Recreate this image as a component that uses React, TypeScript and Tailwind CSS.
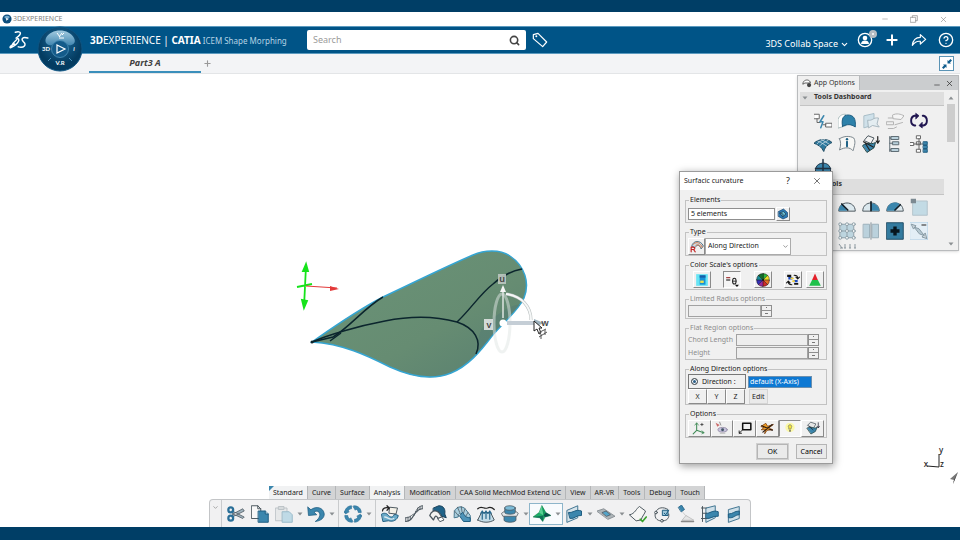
import React from 'react';
import { Minus, Plus, X, Search, CircleHelp, ChevronDown } from 'lucide-react';

const OUT = '#4b565e';
const BLUE = '#3b86ad';
const DEEP = '#1d5c80';
const PALE = '#b9d8e6';

const Icon: React.FC<{ size?: string; children: React.ReactNode }> = ({ size = 'size-[18px]', children }) => (
  <svg viewBox="0 0 24 24" className={`${size} shrink-0`} fill="none" strokeWidth={1.3} strokeLinecap="round" strokeLinejoin="round" aria-hidden="true">
    {children}
  </svg>
);

/* ---------- bottom toolbar ---------- */

const toolArt: Record<string, React.ReactNode> = {
  Cut: (
    <g>
      <path d="M7 8L23 16L21 18L8 12ZM7 16L23 8L21 5L8 12Z" fill="#9fb2bd" stroke={OUT} strokeWidth={1} />
      <circle cx="5" cy="6.500" r="3.200" stroke="#2a6f98" strokeWidth={3} />
      <circle cx="5" cy="17.500" r="3.200" stroke="#2a6f98" strokeWidth={3} />
    </g>
  ),
  Copy: (
    <g>
      <path d="M1 1H9L13 5V18H1Z" fill="#f8f8f8" stroke={OUT} />
      <path d="M9 1V5H13" stroke={OUT} />
      <path d="M10 8H19L23 12V23H10Z" fill={BLUE} stroke={DEEP} />
      <path d="M19 8V12H23" fill={PALE} stroke={DEEP} />
    </g>
  ),
  Paste: (
    <g>
      <path d="M1 4H16V21H1Z" fill="#e6e8e9" stroke="#bcc2c6" />
      <path d="M5 2H12V6H5Z" fill="#d7dbdd" stroke="#bcc2c6" />
      <path d="M10 9H19L23 13V23H10Z" fill="#bfdae6" stroke="#98b9c9" />
    </g>
  ),
  Undo: <path d="M1 3L2 14L13 13L9.500 9.500C13 6.500 18 9 17 14C16.500 17 14 20 11 22C19 21 23 17 23 12C22 3 12 1 5.500 6Z" fill={BLUE} stroke={DEEP} strokeWidth={1} />,
  Update: (
    <g fill={BLUE} stroke="#2b7199" strokeWidth={0.8}>
      <path d="M1 10C1 5 5 1 10 1V5C8 5 6 6.500 5.500 8L7 9L2 12L0 8Z" />
      <path d="M14 1C19 1 23 5 23 10H19C19 8 17.500 6 16 5.500L15 7L12 2Z" />
      <path d="M23 14C23 19 19 23 14 23V19C16 19 18 17.500 18.500 16L17 15L22 12L24 16Z" />
      <path d="M10 23C5 23 1 19 1 14H5C5 16 6.500 18 8 18.500L9 17L12 22Z" />
    </g>
  ),
  'Morph Surface': (
    <g>
      <path d="M1 12C4 10 8 11 10 14C13 17 16 17 18 12L23 14C22 20 16 23 10 21L3 22Z" fill="#6aaac8" stroke={DEEP} />
      <path d="M12 3L22 4L20 12L11 11Z" fill="#f4f1e8" stroke={OUT} />
      <path d="M2 8C2 4 6 3 10 4M8 1L11 4L8 7" stroke="#222" strokeWidth={1.600} />
      <path d="M5 16C9 16 12 21 17 18" stroke="#dceaf1" strokeWidth={1.800} />
    </g>
  ),
  'Curvature Comb': (
    <g stroke={OUT} strokeWidth={1.200}>
      <path d="M1 22C13 22 10 6 23 5" strokeWidth={1.600} />
      <path d="M1 17C8 17 8 13 12 12M12 14C15 8 16 2 23 1" />
      <path d="M1 17V22M4 16V21M7 15V19M14 9L16 9M17 4V8M20 2V6M23 1V5" />
    </g>
  ),
  'Reflect Lines': (
    <g>
      <path d="M6 4L13 1C20 1 22 6 21 12L23 17L17 15C15 10 12 8 6 8Z" fill="#1f6288" stroke="#173f58" />
      <path d="M1 14C3 8 8 6 13 10L17 16L12 18C10 13 8 14 6 20Z" fill="#f3f3f1" stroke={OUT} strokeWidth={1.600} />
      <path d="M12 18L17 16L20 20L15 22Z" fill="#fff" stroke={OUT} />
    </g>
  ),
  Highlight: (
    <g>
      <path d="M2 8C5 1 13 1 17 6L23 14V21L16 19L11 12C9 10 7 12 7 16L2 17Z" fill="#a9cede" stroke="#42738c" />
      <path d="M13 10C15 13 16 17 23 17V22L14 22L9 15Z" fill="#4d93b8" stroke={DEEP} />
      <path d="M2 8L7 14M6 3L9 10M11 2L12 9M16 5L14 11M20 10L17 15" stroke={OUT} strokeWidth={1} />
    </g>
  ),
  'Distance Analysis': (
    <g>
      <path d="M1 20L6 10H18L23 20C16 24 8 24 1 20Z" fill="#c3dce8" stroke={OUT} />
      <path d="M1 5C6 0 9 6 14 4C18 2 20 3 23 6" stroke="#222" strokeWidth={1.600} />
      <path d="M7 19V8M12 18V8M17 19V8M5 11L7 8L9 11M10 11L12 8L14 11M15 11L17 8L19 11" stroke="#27678c" strokeWidth={1.600} />
    </g>
  ),
  'Section Analysis': (
    <g stroke={OUT} strokeWidth={1}>
      <path d="M4 14V20C4 24 20 24 20 20V14Z" fill={BLUE} />
      <path d="M1 11L5 8H19L23 11L21 15H3Z" fill="#e4e7e9" />
      <path d="M5 4V10C5 13 19 13 19 10V4Z" fill={BLUE} />
      <ellipse cx="12" cy="4" rx="7" ry="3" fill="#7dbbd7" />
    </g>
  ),
  'Surfacic Curvature': (
    <g strokeWidth={0.6}>
      <path d="M12 1L17 10L24 14L16 16L13 22L9 17L0 16L8 10Z" fill="#1dae68" stroke="#0b6b3b" />
      <path d="M12 1L14 14L8 10Z" fill="#58cf93" />
      <path d="M12 1L17 10L14 14Z" fill="#169a5d" />
      <path d="M17 10L24 14L16 16L14 14Z" fill="#0b4f4a" />
      <path d="M0 16L14 14L13 22L9 17Z" fill="#0f7358" />
    </g>
  ),
  'Cutting Planes': (
    <g>
      <path d="M3 7L17 1V17L3 23Z" fill="#d5e3ea" stroke="#3f7390" />
      <path d="M5 10C11 11 14 5 22 8V14C15 13 13 19 7 18Z" fill={BLUE} stroke={DEEP} />
    </g>
  ),
  Plane: (
    <g>
      <path d="M0 8L9 5L24 15L15 19Z" fill="#aeb5b9" stroke="#777f84" strokeWidth={1} />
      <path d="M7 10L12 8L18 13L13 15Z" fill="#54a3c7" stroke={OUT} strokeWidth={1} />
    </g>
  ),
  'Check Surface': (
    <g>
      <path d="M1 13C8 12 10 4 14 2L22 8C21 12 18 14 16 20L10 21Z" fill="#f6f6f5" stroke={OUT} />
      <path d="M15 19L18 22L23 16" stroke="#38a22b" strokeWidth={2.200} />
    </g>
  ),
  'Check Contour': (
    <g>
      <path d="M4 9C6 3 14 2 20 6M3 11C1 19 8 22 13 21C19 21 22 17 21 12" stroke={OUT} />
      <path d="M13 7H20V14H13Z" fill="#9cc6da" stroke={DEEP} />
      <circle cx="4" cy="10" r="1.800" fill="#fff" stroke={OUT} />
      <circle cx="12" cy="21" r="1.800" fill="#fff" stroke={OUT} />
      <path d="M15 11L17 13L21 7" stroke={DEEP} />
    </g>
  ),
  Lighting: (
    <g>
      <path d="M2 3L6 0L10 6L6 9Z" fill={BLUE} stroke={DEEP} strokeWidth={1} />
      <path d="M8 10L14 17" stroke="#ccc" />
      <path d="M7 20L12 14L22 20Z" fill="#e5e5e5" stroke="#b5b5b5" strokeWidth={1} />
      <path d="M6 22H22" stroke="#888" strokeWidth={2} />
    </g>
  ),
  'Local Section': (
    <g>
      <path d="M7 4L19 1V17L7 23Z" fill="#cfe0e9" stroke="#3f7390" />
      <path d="M7 11C12 12 15 6 23 9V15C16 14 13 19 7 18Z" fill={BLUE} stroke={DEEP} />
      <path d="M2 2V22M0 4H7M2 11H7M0 18H7" stroke={OUT} />
    </g>
  ),
  'Half Section': (
    <g>
      <path d="M5 6L19 2V18L5 23Z" fill="#cfe0e9" stroke="#3f7390" />
      <path d="M5 12C11 12 12 8 19 8V13C13 13 12 18 5 17Z" fill={BLUE} stroke={DEEP} />
    </g>
  ),
};

const toolGroups: { name: string; menu?: boolean }[][] = [
  [{ name: 'Cut' }, { name: 'Copy' }, { name: 'Paste', menu: true }, { name: 'Undo', menu: true }],
  [{ name: 'Update', menu: true }],
  [
    { name: 'Morph Surface' },
    { name: 'Curvature Comb' },
    { name: 'Reflect Lines' },
    { name: 'Highlight' },
    { name: 'Distance Analysis' },
    { name: 'Section Analysis', menu: true },
    { name: 'Surfacic Curvature', menu: true },
    { name: 'Cutting Planes', menu: true },
    { name: 'Plane', menu: true },
    { name: 'Check Surface' },
    { name: 'Check Contour' },
    { name: 'Lighting' },
    { name: 'Local Section' },
    { name: 'Half Section' },
  ],
];

const tabs = ['Standard', 'Curve', 'Surface', 'Analysis', 'Modification', 'CAA Solid MechMod Extend UC', 'View', 'AR-VR', 'Tools', 'Debug', 'Touch'];

const Caret = () => (
  <svg viewBox="0 0 6 4" className="h-1 w-1.5" aria-hidden="true">
    <path d="M0.500 0.500H5.500L3 3.500Z" fill="#8b8f92" />
  </svg>
);

const ActionBar = () => (
  <div className="relative mx-auto w-fit">
    <div className="flex pl-[60px]" role="tablist">
      {tabs.map(tab => (
        <button
          key={tab}
          role="tab"
          aria-selected={tab === 'Analysis'}
          className={`relative h-[13px] border-r border-[#b4b6b8] px-1 text-[7px] leading-3 whitespace-nowrap text-[#222] ${
            tab === 'Analysis' || tab === 'Standard' ? 'bg-[#f1f2f3]' : 'bg-[#d3d4d5]'
          }`}
        >
          {tab === 'Standard' && (
            <svg viewBox="0 0 5 5" className="absolute top-0 left-0 size-[5px]" aria-hidden="true">
              <path d="M0 0H5L0 5Z" fill={BLUE} />
            </svg>
          )}
          {tab}
        </button>
      ))}
    </div>
    <div className="flex h-7 items-stretch rounded-t border border-b-0 border-[#c3c5c7] bg-[#f1f1f2] pr-0.5">
      <button aria-label="Collapse action bar" className="flex w-3 justify-center border-r border-[#c9cbcd] pt-1 text-[#777]">
        <ChevronDown size={7} />
      </button>
      {toolGroups.map((group, i) => (
        <div key={i} className="flex items-center border-l border-[#c9cbcd] px-0.5 first-of-type:border-l-0">
          {group.map(tool => {
            const active = tool.name === 'Surfacic Curvature';
            return (
              <div key={tool.name} className={`flex h-[20px] items-center ${active ? 'bg-[#f8fbfd] outline outline-[#8db5ca]' : ''}`}>
                <button aria-label={tool.name} className="flex w-6 justify-center">
                  <Icon>{toolArt[tool.name]}</Icon>
                </button>
                {tool.menu && (
                  <button aria-label={`${tool.name} menu`} className="flex w-2 justify-center">
                    <Caret />
                  </button>
                )}
              </div>
            );
          })}
        </div>
      ))}
    </div>
  </div>
);

/* ---------- app options panel ---------- */

const gauge = (needle: string, side: string) => (
  <g>
    <path d="M1 17C1 3 23 3 23 17Z" fill="#dbe8ee" stroke={OUT} />
    <path d={side} fill={BLUE} />
    <path d={needle} stroke="#111d26" strokeWidth={2.200} />
  </g>
);

const dashboard: [string, React.ReactNode][] = [
  ['Connect', <g><path d="M0 3H7V9H0ZM16 15H24V20H16Z" fill="#fff" stroke="#666" /><path d="M4 9V14H8M12 17H16" stroke="#666" /><path d="M13 5L8 13H12L9 21" stroke={BLUE} strokeWidth={2} /></g>],
  ['Surface Patch', <g><path d="M0 21V10C2 4 6 3 10 3V18Z" fill="#fff" stroke="#abb" /><path d="M6 19C4 8 8 4 13 4C21 4 24 9 23 20C17 16 13 16 6 19Z" fill="#2d81aa" stroke={DEEP} /></g>],
  ['Fill', <g><path d="M3 5L16 2V17L3 21Z" fill="#cfe1ea" stroke="#a7bcc6" /><path d="M8 11C15 12 14 7 22 8L20 16L23 20L14 18L9 21Z" fill="#e4edf1" stroke="#a8b7bf" /></g>],
  ['Offset', <g stroke="#b2b2b2"><path d="M9 4C14 1 20 3 24 5L20 10L10 9Z" fill="#f5f5f5" /><path d="M3 8H9M1 13H10V17H1ZM12 17L22 14M3 22H10L14 20" /></g>],
  ['Swap', <g stroke="#201650" strokeWidth={2.600}><path d="M9 5H6C0 7 0 16 6 18H7M15 18H18C24 16 24 7 18 5H17" /><path d="M8 2L12 5L8 9ZM16 21L12 18L16 14Z" fill="#201650" strokeWidth={1} /></g>],
  ['Mesh', <g><path d="M0 11C5 5 18 4 24 10C19 13 15 15 13 22C10 16 6 13 0 11Z" fill="#2d789d" stroke="#214c63" /><path d="M5 8C10 10 14 13 17 15M10 6L20 12M19 7C14 10 9 12 7 15M14 6C9 8 6 9 4 12" stroke="#c9dce5" strokeWidth={1} /></g>],
  ['Information', <g><path d="M2 5C8 1 16 1 21 4C24 9 22 14 20 21C16 16 9 16 2 20C4 14 4 9 2 5Z" fill="#f7f7f5" stroke="#78848b" /><path d="M12 9V15" stroke="#1c6085" strokeWidth={2.600} /><circle cx="12" cy="5.500" r="1.600" fill="#1c6085" /></g>],
  ['Import', <g><path d="M3 7L8 1L16 4L12 11Z" fill="#f3f3f3" stroke={OUT} /><path d="M1 14C8 8 10 14 18 10L16 17L7 23Z" fill={BLUE} stroke="#244" /><path d="M2 9L15 16M5 12L10 20M21 2V10M19 8L21 11L23 8" stroke="#222" strokeWidth={1.600} /></g>],
  ['Structure', <g><path d="M7 2H17V6H7ZM9 9H17V13H9ZM7 18H17V22H7Z" fill="#b9d0db" stroke="#5d6a72" /><path d="M5 2V22M5 11H9M5 4H7M5 20H7" stroke="#5d6a72" /></g>],
  ['Tree', <g stroke="#666"><path d="M9 1H14V5H9ZM0 10H5V14H0ZM9 9H14V13H9ZM9 19H14V23H9Z" fill="#fff" /><path d="M12 5V19M5 12H18" /><path d="M18 9H23V13H18ZM18 14H23V18H18ZM18 19H23V23H18Z" fill={BLUE} stroke={DEEP} /></g>],
  ['Compare', <g><path d="M2 18C0 3 24 3 22 18L18 22H6Z" fill={BLUE} stroke="#234" /><path d="M12 2V22M2 14H22" stroke="#234" strokeWidth={2} /></g>],
];

const tools: [string, React.ReactNode][] = [
  ['Free', <path d="M2 2H22V22H2Z" fill="#cde4f3" stroke="#7db2d6" />],
  ['Low', gauge('M13 16L5 8', 'M12 17H1C1 13 3 10 6 8Z')],
  ['Middle', gauge('M12 17V5', 'M12 7C18 7 23 11 23 17H12Z')],
  ['High', gauge('M12 16L19 9', 'M1 17C1 8 11 3 18 8L12 17Z')],
  ['Corner', <g><path d="M4 4H23V23H4Z" fill="#c3dbe5" stroke="#b4c4cc" /><path d="M1 1H8V7H1Z" fill="#7c8a92" /></g>],
  ['Anchor', <path d="M2 2H22V22H2Z" fill="#e3edf2" stroke="#8da1ac" />],
  ['Grid', <g><path d="M3 3H21V21H3Z" fill="#bdd5df" stroke="#90a1aa" /><path d="M12 3V21M3 12H21" stroke="#90a1aa" /><g fill="#f3f6f7" stroke="#90a1aa"><circle cx="3" cy="3" r="2" /><circle cx="12" cy="3" r="2" /><circle cx="21" cy="3" r="2" /><circle cx="3" cy="12" r="2" /><circle cx="12" cy="12" r="2" /><circle cx="21" cy="12" r="2" /><circle cx="3" cy="21" r="2" /><circle cx="12" cy="21" r="2" /><circle cx="21" cy="21" r="2" /></g></g>],
  ['Mirror', <g><path d="M2 3H10V21H2ZM14 3H22V21H14Z" fill="#bad1dc" stroke="#9bb0ba" /><path d="M12 1V23" stroke="#7e8d95" /></g>],
  ['Add', <g><path d="M1 1H23V23H1Z" fill="#347b9f" stroke="#214d66" /><path d="M12 6V18M6 12H18" stroke="#07151e" strokeWidth={4.500} strokeLinecap="butt" /></g>],
  ['Stretch', <g><path d="M0 0H24V24H0Z" fill="#e3eef6" stroke="#a9cbe2" /><path d="M2 3L8 5L5 9ZM22 22L16 20L20 15Z" fill="#cbd5da" stroke="#8799a3" /><path d="M6 7L12 9L19 18L13 16Z" fill="#b5c8d2" stroke="#8799a3" /><path d="M16 4H21" stroke="#666" strokeWidth={2} /></g>],
];

const Section: React.FC<{ title: string; hidden?: boolean }> = ({ title, hidden }) => (
  <h3 className={`flex items-start gap-1.5 border-b border-[#c4c4c4] bg-[#dedede] text-[7px] leading-[10px] font-bold text-[#333] ${hidden ? 'h-4 pl-6' : 'h-[14px] pl-0.5'}`}>
    {!hidden && <span className="pt-1"><Caret /></span>}
    {title}
  </h3>
);

const AppOptions = () => (
  <aside className="absolute top-px right-px w-[162px] border border-[#b9bbbd] bg-[#f0f0f0] shadow">
    <header className="flex h-[14px] items-center bg-[#cbcdcf] text-[#333]">
      <h2 className="flex h-full items-center gap-0.5 border-r border-[#b9bbbd] bg-[#f0f0f0] px-1 text-[7px] leading-3 whitespace-nowrap">
        <Icon size="size-2.5">
          <path d="M2 14C2 2 20 2 20 12H8Z" fill="#fff" stroke="#444" strokeWidth={2} />
          <circle cx="17" cy="17" r="5" fill="#444" />
        </Icon>
        App Options
      </h2>
      <button aria-label="Minimize panel" className="ml-auto pt-1"><Minus size={8} /></button>
      <button aria-label="Close panel" className="px-1"><X size={9} /></button>
    </header>
    <div className="flex h-[160px] overflow-hidden pt-0.5 pl-0.5">
      <div className="min-w-0 flex-1">
        <Section title="Tools Dashboard" />
        <div className="grid h-[73px] auto-rows-[23px] grid-cols-[repeat(5,24px)] place-items-center overflow-hidden pt-[3px] pl-[11px]">
          {dashboard.map(([name, art]) => (
            <button key={name} aria-label={name}><Icon>{art}</Icon></button>
          ))}
        </div>
        <Section title="Tools" hidden />
        <div className="grid auto-rows-[24px] grid-cols-[repeat(5,24px)] place-items-center pl-[11px]">
          {tools.map(([name, art]) => (
            <button key={name} aria-label={name}><Icon>{art}</Icon></button>
          ))}
        </div>
        <svg viewBox="0 0 24 6" className="ml-9 h-1.5 w-6" stroke="#8b979e" aria-hidden="true">
          <path d="M3 1L6 5M9 1V5M14 1V5M19 1V5M4 5H7M8 5H10M13 5H15M18 5H20" fill="none" />
        </svg>
      </div>
      <div className="flex w-[14px] flex-col items-center justify-between py-1">
        <div className="flex flex-col items-center gap-1">
          <div className="rotate-180"><Caret /></div>
          <div className="h-[38px] w-2 bg-[#cdcdcd]" />
        </div>
        <Caret />
      </div>
    </div>
  </aside>
);

/* ---------- surfacic curvature dialog ---------- */

const Group: React.FC<{ title: string; disabled?: boolean; children: React.ReactNode }> = ({ title, disabled, children }) => (
  <fieldset disabled={disabled} className={`min-w-0 border border-[#c2c2c2] px-0.5 ${disabled ? 'text-[#8c8c8c]' : 'text-[#1a1a1a]'}`}>
    <legend className="ml-px h-2.5 px-px leading-[10px]">{title}</legend>
    {children}
  </fieldset>
);

const raised = 'flex items-center justify-center border border-t-white border-l-white border-r-[#8a8a8a] border-b-[#8a8a8a] bg-[#f0f0f0]';
const sunken = 'flex items-center justify-center border border-t-[#8a8a8a] border-l-[#8a8a8a] border-r-white border-b-white bg-[#f5f5f5]';

const Spinner: React.FC<{ name: string; label?: string; width: string }> = ({ name, label, width }) => (
  <div className="flex h-[13px] items-center pr-[5px]">
    {label && <label htmlFor={name} className="w-12 shrink-0 whitespace-nowrap">{label}</label>}
    <input id={name} aria-label={name} className={`h-3 min-w-0 border border-[#a2a2a2] bg-[#eee] ${width}`} />
    <div className="flex h-3 w-[11px] flex-col border border-[#8f8f8f]">
      <button aria-label={`${name} up`} className="flex h-[5px] items-center justify-center border-b border-[#8f8f8f]"><span className="size-px bg-[#777]" /></button>
      <button aria-label={`${name} down`} className="flex h-[5px] items-center justify-center"><span className="h-px w-[3px] bg-[#777]" /></button>
    </div>
  </div>
);

const colorArt: [string, string, React.ReactNode][] = [
  ['Color scale', raised, <g><path d="M2 2H22V22H2Z" fill="#66e4f3" /><path d="M8 4H18V20H8Z" fill="#1592d7" /><path d="M8 4H18V8H8Z" fill="#1760a8" /><path d="M9 13H15V17H9Z" fill="#f0e34c" /></g>],
  ['Sharp', sunken, <g><path d="M2 7H9V9H2Z" fill="#a03030" /><path d="M2 11H9V13H2Z" fill="#222" /><ellipse cx="16" cy="14" rx="3" ry="5" stroke="#222" strokeWidth={1.800} /><path d="M13 14H19" stroke="#222" strokeWidth={1.500} /><path d="M17 20H24L20.500 24Z" fill="#111" /></g>],
  ['Color wheel', raised, <g stroke="#111" strokeWidth={0.8}><path d="M12 12V1A11 11 0 0 1 20 4Z" fill="#2dbb3f" /><path d="M12 12L20 4A11 11 0 0 1 23 12Z" fill="#f0df29" /><path d="M12 12H23A11 11 0 0 1 20 20Z" fill="#e56f25" /><path d="M12 12L20 20A11 11 0 0 1 12 23Z" fill="#d02a2a" /><path d="M12 12V23A11 11 0 0 1 4 20Z" fill="#9a2c9b" /><path d="M12 12L4 20A11 11 0 0 1 1 12Z" fill="#3530b8" /><path d="M12 12H1A11 11 0 0 1 4 4Z" fill="#188b97" /><path d="M12 12L4 4A11 11 0 0 1 12 1Z" fill="#156f2c" /></g>],
  ['Swap colors', raised, <g><path d="M2 3H9V7H2ZM14 17H21V20H14Z" fill="#111" /><path d="M4 7H11V11H4ZM13 12H20V16H13Z" fill="#1a49c4" /><path d="M9 9H12M12 14H14" stroke="#f4d43d" strokeWidth={3} /><path d="M14 4C19 4 20 6 20 9M17 7L20 10L23 7M10 20C5 20 4 18 4 15M1 17L4 14L7 17" stroke="#111" strokeWidth={1.800} /></g>],
  ['Range', raised, <g><path d="M12 1L17 12H7Z" fill="#e3202a" /><path d="M7 12H17L22 22H2Z" fill="#1fc14b" /></g>],
];

const optionArt: [string, string, React.ReactNode][] = [
  ['3D axis', raised, <g><path d="M8 16V4M8 16L20 20M8 16L2 22" stroke="#3f8b56" strokeWidth={1.800} /><path d="M5 7L8 3L11 7M17 17L21 20L17 22" stroke="#3f8b56" /><path d="M17 4V8M15 6H19" stroke="#333" /></g>],
  ['On the fly', raised, <g><path d="M1 3L8 7L4 10Z" fill="#cc6a6a" /><path d="M8 2L10 7" stroke="#777" /><ellipse cx="13" cy="15" rx="8" ry="4" fill="#c6c2dc" stroke="#8d86a0" /><circle cx="13" cy="15" r="2.500" fill="#456" /><path d="M9 21H17" stroke="#aaa" /></g>],
  ['Min max box', raised, <g><path d="M8 4H22V15H8Z" stroke="#111" strokeWidth={2.600} /><path d="M8 15L2 21M2 17V21H6" stroke="#111" strokeWidth={1.500} /></g>],
  ['No highlight', raised, <g><path d="M2 9L10 4L13 9L23 6L15 12L22 15L12 16L8 22L9 15H2L6 12Z" fill="#ef9e24" stroke="#7a3a0c" /><path d="M3 8L21 16M5 19L21 6" stroke="#2a1a12" strokeWidth={2} /></g>],
  ['Light source', sunken, <g><circle cx="12" cy="11" r="8" fill="#fbf9a8" /><path d="M9.500 11A3 3 0 1 1 14.500 11L13.500 14H10.500Z" fill="#f3e53a" stroke="#666" strokeWidth={1} /><path d="M11.500 17H12.500" stroke="#333" strokeWidth={2} /></g>],
  ['Gallery', raised, <g><path d="M3 7L8 2L17 5L13 12Z" fill="#e6e6e6" stroke={OUT} /><path d="M2 12C9 8 12 14 19 11L16 18L9 22Z" fill={BLUE} stroke="#244" /><path d="M5 9L12 15M21 3V11M19 9L21 12L23 9" stroke="#223" /></g>],
];

const push = 'h-[15px] border border-[#b5b5b5] bg-[#eaeaea]';

const CurvatureDialog = () => (
  <section
    role="dialog"
    aria-labelledby="dialog-title"
    className="absolute top-[97px] right-[127px] flex w-[154px] flex-col border border-[#9b9b9b] bg-[#f0f0f0] text-[7px] leading-[10px] shadow-[1px_2px_8px_rgba(0,0,0,0.4)]"
  >
    <header className="flex h-[18px] items-center bg-white pr-2.5 pl-1 text-[#222]">
      <h2 id="dialog-title" className="flex-1">Surfacic curvature</h2>
      <button aria-label="Help" className="mr-[22px] text-[9px]">?</button>
      <button aria-label="Close dialog"><X size={10} strokeWidth={1.500} /></button>
    </header>
    <form className="flex flex-col gap-1 px-[5px] pt-[5px] pb-1" onSubmit={e => e.preventDefault()}>
      <Group title="Elements">
        <div className="flex h-[17px] items-center gap-px">
          <input aria-label="Elements" defaultValue="5 elements" className="h-3 w-[87px] border border-[#8f8f8f] bg-white px-0.5 text-[#222]" />
          <button aria-label="Element list" className={`size-[14px] ${raised}`}>
            <Icon size="size-3"><path d="M3 7L13 2L21 9V18L12 22L3 17Z" fill="#2a7ab4" stroke="#123c66" /><path d="M6 10L13 7L18 12L12 17Z" fill="#68bfd2" stroke="#234" /><path d="M12 17V12L6 10" stroke="#234" /></Icon>
          </button>
        </div>
      </Group>
      <Group title="Type">
        <div className="flex h-[18px] items-center">
          <button aria-label="Curvature type" className={`h-[17px] w-[17px] ${raised}`}>
            <Icon size="size-[14px]"><path d="M3 12C5 2 18 1 23 12L19 17C17 10 12 9 9 14Z" fill="#c7dde8" stroke="#356" /><path d="M6 9C12 3 18 7 21 14M10 11C14 8 16 10 18 14" stroke="#e0703a" strokeWidth={1.500} /><path d="M2 22V14H6C9 14 9 18 6 18H2M6 18L9 22" stroke="#c22626" strokeWidth={2} /></Icon>
          </button>
          <div className="relative w-[86px]">
            <select aria-label="Type" className="h-[17px] w-full appearance-none border border-[#ababab] bg-white pl-0.5 text-[#222]">
              <option>Along Direction</option>
            </select>
            <ChevronDown size={7} className="pointer-events-none absolute top-[5px] right-0.5 text-[#555]" />
          </div>
        </div>
      </Group>
      <Group title="Color Scale's options">
        <div className="flex h-[19px] items-center justify-between pl-[5px]">
          {colorArt.map(([name, look, art], i) => (
            <button key={name} type="button" aria-label={name} className={`h-[17px] w-[18px] ${look} ${i < 3 ? 'mr-2' : ''}`}>
              <Icon size="size-[14px]">{art}</Icon>
            </button>
          ))}
        </div>
      </Group>
      <Group title="Limited Radius options" disabled>
        <div className="h-[14px]"><Spinner name="Limited radius" width="w-[73px]" /></div>
      </Group>
      <Group title="Flat Region options" disabled>
        <div className="h-[26px]">
          <Spinner name="Chord Length" label="Chord Length" width="flex-1" />
          <Spinner name="Height" label="Height" width="flex-1" />
        </div>
      </Group>
      <Group title="Along Direction options">
        <div className="flex h-[15px] items-center gap-0.5">
          <label className="flex h-[15px] w-[58px] items-center gap-1 border border-[#777] pl-0.5">
            <input type="radio" defaultChecked className="size-[7px] appearance-none rounded-full border border-[#555] bg-[#2d5f87] ring-1 ring-white ring-inset" />
            Direction :
          </label>
          <input aria-label="Direction element" defaultValue="default (X-Axis)" className="h-3 w-16 border border-[#6b8fae] bg-[#0d78d3] px-px text-white" />
        </div>
        <div className="flex h-[15px]">
          {['X', 'Y', 'Z'].map(axis => (
            <button key={axis} type="button" className={`w-[19px] ${raised}`}>{axis}</button>
          ))}
          <button type="button" className="ml-1 border border-[#d4d4d4] bg-[#eaeaea] px-0.5">Edit</button>
        </div>
      </Group>
      <Group title="Options">
        <div className="flex h-[18px] items-center">
          {optionArt.map(([name, look, art]) => (
            <button key={name} type="button" aria-label={name} className={`h-[17px] flex-1 ${look}`}>
              <Icon size="size-[14px]">{art}</Icon>
            </button>
          ))}
        </div>
      </Group>
      <div className="mt-0.5 flex justify-end gap-2">
        <button className={`w-[31px] outline outline-[#d0d0d0] ${push}`}>OK</button>
        <button type="button" className={`w-[31px] ${push}`}>Cancel</button>
      </div>
    </form>
  </section>
);

/* ---------- 3D view ---------- */

const Viewport = () => (
  <svg viewBox="0 74 960 453" className="absolute inset-0 size-full" role="img" aria-label="3D view">
    <defs>
      <linearGradient id="skin" x1="0" y1="0" x2="1" y2="1">
        <stop offset="0" stopColor="#6b9478" />
        <stop offset="0.600" stopColor="#668c72" />
        <stop offset="1" stopColor="#587f70" />
      </linearGradient>
    </defs>
    <path
      d="M312 342C335 326 356 311 383 297C415 282 445 267 473 255C484 250 500 249 510 256C525 266 530 283 524 298C518 311 503 323 492 336C480 352 468 366 451 373C432 381 412 377 390 367C366 355 343 344 312 342Z"
      fill="url(#skin)"
      stroke="#35a5d2"
      strokeWidth={1.500}
    />
    <path d="M477 353C487 342 494 333 503 323L520 305C514 303 499 313 488 322C476 332 480 340 477 353Z" fill="#547c74" opacity={0.5} />
    <g fill="none" stroke="#0b252d" strokeWidth={1.500}>
      <path d="M312 342C328 335 358 326 385 321C410 316 435 316 457 322C475 328 482 341 476 354" />
      <path d="M312 342L333 337C350 327 364 308 383 297" />
      <path d="M330 341L341 333M457 322C470 310 480 294 493 284C502 276 510 271 522 269" />
    </g>
    <circle cx="312" cy="342" r="1.500" fill="#0b252d" />

    <g stroke="#16e31b" strokeWidth={1.800} fill="#16e31b">
      <path d="M306 266L304 307M297 287L312 284" fill="none" />
      <path d="M306 264L303 271H308ZM304 308L302 300L307 301Z" />
    </g>
    <path d="M306 286L337 288" stroke="#e33a3a" strokeWidth={1} />
    <path d="M339 289L330 286V291Z" fill="#e33a3a" />

    {/* robot manipulator */}
    <ellipse cx="502" cy="323" rx="8" ry="29" fill="none" stroke="#dfe5e3" strokeWidth={3} opacity={0.5} />
    <path d="M506 294C522 296 531 307 531 320" fill="none" stroke="#b9bfbf" strokeWidth={3} />
    <path d="M506 294C522 296 531 307 531 320" fill="none" stroke="#f5f7f7" strokeWidth={2} />
    <path d="M503 318V287" stroke="#dfe4e2" strokeWidth={1.500} />
    <path d="M503 285L500 292H506Z" fill="#f5f5f5" />
    <path d="M507 323H535" stroke="#c5ced6" strokeWidth={4} />
    <path d="M534 319L544 323L534 327Z" fill="#9eb3bf" />
    <circle cx="503" cy="323" r="3.500" fill="#fff" />
    <rect x="498" y="274" width="8" height="10" fill="#bdc7c1" opacity={0.9} />
    <rect x="484" y="319" width="9" height="11" fill="#dfe3e2" opacity={0.9} />
    <g fontFamily="Noto Sans, sans-serif" fontWeight={600} fontSize={9} textAnchor="middle" fill="#444">
      <text x="502" y="282">u</text>
      <text x="489" y="328">v</text>
      <text x="545" y="326">w</text>
    </g>
    <path d="M534 321V331L537 329L539 334L541 333L539 328H542Z" fill="#fff" stroke="#222" strokeWidth={1} />
    <path d="M538 333L546 329M539 337L547 332M541 339V334M545 335V330" stroke="#555" strokeWidth={1} />

    {/* absolute axis */}
    <path d="M927 466L939 467V454" fill="none" stroke="#222" strokeWidth={1} />
    <g fontFamily="Noto Sans, sans-serif" fontWeight={500} fontSize={8} textAnchor="middle" fill="#222">
      <text x="941" y="453">y</text>
      <text x="926" y="467">x</text>
      <text x="942" y="467">z</text>
    </g>
    <path d="M958 472L950 479L954 480L953 484Z" fill="#777" />
    <path d="M958 472L954 480L953 484Z" fill="#333" />
  </svg>
);

/* ---------- top bars ---------- */

const Compass = () => (
  <button aria-label="Compass" className="absolute -top-px left-[37px] z-10 size-[46px]">
    <svg viewBox="0 0 46 46" className="size-full">
      <defs>
        <radialGradient id="ball" cx="0.500" cy="0.350">
          <stop offset="0" stopColor="#1d6c9d" />
          <stop offset="1" stopColor="#043c61" />
        </radialGradient>
        <linearGradient id="cap" x1="0" y1="0" x2="0" y2="1">
          <stop offset="0" stopColor="#a3cbe0" />
          <stop offset="1" stopColor="#4287b1" />
        </linearGradient>
      </defs>
      <circle cx="23" cy="23" r="22" fill="url(#ball)" stroke="#0d5584" />
      <path d="M9 12C14 2 32 2 37 12C40 18 34 20 31 19C28 14 18 14 15 19C11 20 7 17 9 12Z" fill="url(#cap)" />
      <circle cx="23" cy="23" r="8.500" fill="#145b8a" stroke="#4c90b9" strokeWidth={0.800} />
      <path d="M20 19L28 23L20 27Z" fill="none" stroke="#fff" strokeWidth={1.200} />
      <path d="M14 32L11 35M32 32L35 35" stroke="#4990b8" />
      <g fill="#fff" fontFamily="Lato, sans-serif" fontWeight={700} fontSize={6} textAnchor="middle">
        <text x="9" y="25">3D</text>
        <text x="23" y="39">V.R</text>
        <text x="37" y="25" fontStyle="italic">i</text>
      </g>
      <path d="M20 7L23 11V13M25 7L22 11M25 9L27 7M24 12L27 12" stroke="#fff" fill="none" />
    </svg>
  </button>
);

const App = () => (
  <div className="flex min-h-screen flex-col overflow-hidden bg-white font-['Noto_Sans','Open_Sans',sans-serif]">
    <div className="h-3 bg-[#003e66]" />
    <div className="flex h-[14px] items-center px-0.5 text-[7px] leading-3 text-[#7f7f7f]">
      <Icon size="size-2.5">
        <circle cx="12" cy="12" r="11" fill="#0c4d7c" />
        <path d="M5 7C9 3 15 3 19 7L16 11H8Z" fill="#74aacd" />
        <path d="M10 9L16 12L10 16Z" fill="#fff" />
      </Icon>
      <span className="ml-px">3DEXPERIENCE</span>
      <div className="ml-auto flex items-center gap-[21px] pr-2.5">
        <button aria-label="Minimize"><Minus size={8} strokeWidth={1.500} /></button>
        <button aria-label="Restore">
          <Icon size="size-2"><path d="M2 7H17V22H2ZM7 7V2H22V17H17" stroke="#888" strokeWidth={2} /></Icon>
        </button>
        <button aria-label="Close"><X size={9} strokeWidth={1.500} /></button>
      </div>
    </div>

    <header className="relative flex h-7 items-center border-y border-[#5b9abf] bg-[#005487] text-white">
      <svg viewBox="0 0 30 28" className="ml-2 w-[22px]" fill="none" stroke="#fff" strokeWidth={2} strokeLinecap="round" strokeLinejoin="round" aria-hidden="true">
        <path d="M10 3C18 1 20 5 11 11C18 11 15 19 4 24C6 19 8 16 12 13M4 24C1 25 4 20 9 19" />
        <path d="M27 11C20 9 17 12 21 16C26 20 22 25 14 23" />
      </svg>
      <Compass />
      <h1 className="ml-[60px] flex w-[217px] shrink-0 items-baseline gap-0.5 text-[10px] whitespace-nowrap">
        <span><b>3D</b>EXPERIENCE | <b>CATIA</b></span>
        <span className="text-[8px] text-[#b5d3e4]">ICEM Shape Morphing</span>
      </h1>
      <div className="flex h-5 w-[219px] items-center rounded-xs bg-white px-1.5">
        <input aria-label="Search" placeholder="Search" className="min-w-0 flex-1 text-[9px] outline-none placeholder:text-[#9a9a9a]" />
        <button aria-label="Run search" className="text-[#444]"><Search size={11} strokeWidth={3.500} /></button>
      </div>
      <button aria-label="Tags" className="ml-1.5">
        <Icon size="size-4">
          <path d="M2 4L9 2L22 15L16 22L2 10Z" stroke="#fff" strokeWidth={1.800} />
          <circle cx="6.500" cy="6.500" r="1.500" fill="#fff" />
        </Icon>
      </button>
      <div className="ml-auto flex items-center pr-1.5">
        <button className="mr-2 flex items-center gap-0.5 pt-2 text-[9px] leading-4 whitespace-nowrap">
          3DS Collab Space <ChevronDown size={9} strokeWidth={3} />
        </button>
        <div className="flex items-center gap-[11px]">
          <button aria-label="Profile" className="relative">
            <Icon size="size-4">
              <circle cx="12" cy="12" r="10" stroke="#fff" strokeWidth={2} />
              <circle cx="12" cy="9" r="3.500" fill="#fff" />
              <path d="M6 18C6 11 18 11 18 18Z" fill="#fff" />
            </Icon>
            <span className="absolute -top-0.5 -right-1 flex size-2 items-center justify-center rounded-full bg-[#b5bcc2]">
              <span className="size-0.5 rounded-full bg-white" />
            </span>
          </button>
          <button aria-label="Add"><Plus size={16} strokeWidth={3} /></button>
          <button aria-label="Share">
            <Icon size="size-4"><path d="M14 4L22 11L14 18V14C8 13 5 16 2 20C3 12 7 8 14 8Z" stroke="#fff" strokeWidth={1.800} /></Icon>
          </button>
          <button aria-label="Help"><CircleHelp size={16} strokeWidth={2} /></button>
        </div>
      </div>
    </header>

    <nav className="flex h-5 items-stretch border-b border-[#e3e5e7] bg-[#f3f4f6] pl-[89px]">
      <a href="#part" className="flex w-28 items-center justify-center border-b-2 border-[#3a8fbb] text-[9px] font-bold text-[#3f3f3f] italic">Part3 A</a>
      <button aria-label="New tab" className="ml-0.5 text-[#999]"><Plus size={9} strokeWidth={3} /></button>
      <button aria-label="Exit full view" className="mr-1.5 ml-auto flex size-[15px] items-center justify-center self-center border border-[#5a93b5] bg-white">
        <Icon size="size-3">
          <path d="M13 11V4L15 6L19 2L22 5L18 9L20 11ZM11 13V20L9 18L5 22L2 19L6 15L4 13Z" fill="#115e8e" />
        </Icon>
      </button>
    </nav>

    <main className="relative flex flex-1 flex-col justify-end">
      <Viewport />
      <AppOptions />
      <CurvatureDialog />
      <ActionBar />
    </main>
    <div className="h-[13px] bg-[#003e66]" />
  </div>
);

export default App;
